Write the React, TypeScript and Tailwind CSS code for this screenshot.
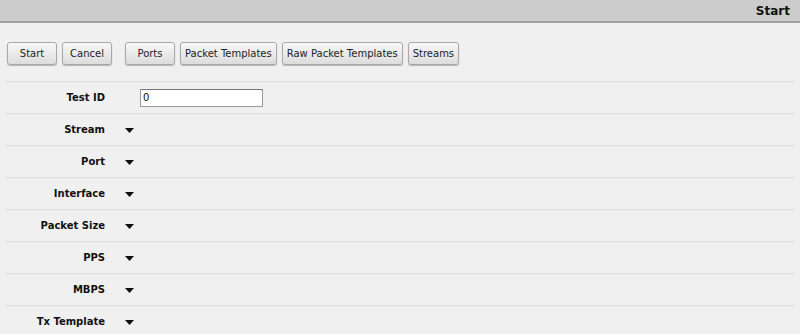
import { ReactNode } from 'react'

const buttonGroups = [
  ['Start', 'Cancel'],
  ['Ports', 'Packet Templates', 'Raw Packet Templates', 'Streams'],
]

const fields = ['Stream', 'Port', 'Interface', 'Packet Size', 'PPS', 'MBPS', 'Tx Template']

function ToolButton({ label }: { label: string }) {
  return (
    <button
      type="button"
      className="h-[23px] min-w-[50px] rounded-[3px] border border-[#a8a8a8] bg-gradient-to-b from-[#f8f8f8] to-[#dcdcdc] px-[4px] text-[10px] text-[#222] shadow-[0_1px_1px_rgba(0,0,0,0.25)]"
    >
      {label}
    </button>
  )
}

function Row({ label, children }: { label: string; children: ReactNode }) {
  return (
    <div className="flex h-[32px] items-center border-t border-[#dcdcdc]">
      <div className="w-[100px] text-right text-[10px] font-bold text-[#111]">{label}</div>
      <div className="ml-[20px] flex items-center">{children}</div>
    </div>
  )
}

function Caret() {
  return (
    <svg width="9" height="5" viewBox="0 0 9 5" className="mt-[1px]">
      <path d="M0 0h9L4.5 5z" fill="#111" />
    </svg>
  )
}

export default function App() {
  return (
    <div className="h-[334px] w-[800px] overflow-hidden bg-[#f0f0f0] font-['DejaVu_Sans',Verdana,sans-serif]">
      <div className="flex h-[23px] items-center justify-end border-b-2 border-[#a0a0a0] bg-[#cccccc] pr-[10px]">
        <span className="text-[12px] font-bold text-[#111]">Start</span>
      </div>

      <div className="flex gap-[13px] pl-[7px] pt-[19px]">
        {buttonGroups.map((group, i) => (
          <div key={i} className="flex gap-[5px]">
            {group.map(label => (
              <ToolButton key={label} label={label} />
            ))}
          </div>
        ))}
      </div>

      <div className="mx-[5px] mt-[16px]">
        <Row label="Test ID">
          <input
            defaultValue="0"
            className="ml-[15px] h-[18px] w-[123px] border border-[#999] border-t-[#777] bg-white px-[2px] text-[10px] text-[#111] outline-none"
          />
        </Row>
        {fields.map(label => (
          <Row key={label} label={label}>
            <Caret />
          </Row>
        ))}
      </div>
    </div>
  )
}
